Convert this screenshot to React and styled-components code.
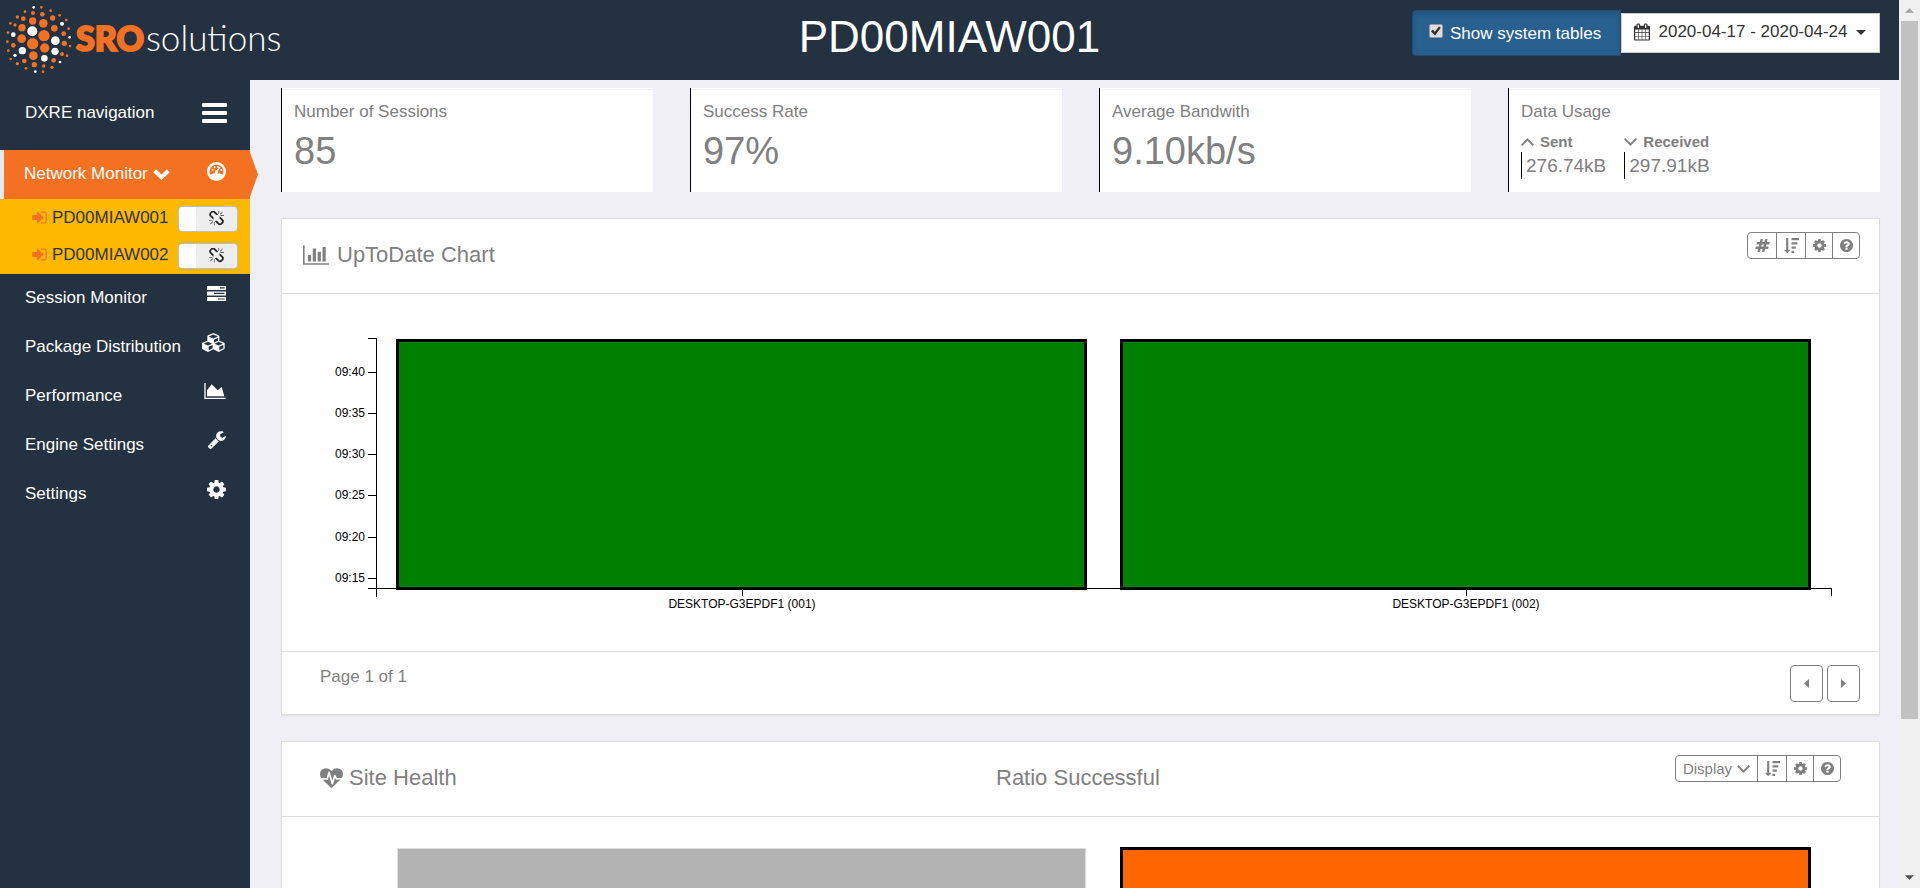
import React, { useLayoutEffect, useRef, useState } from 'react';
import styled, { createGlobalStyle } from 'styled-components';

const GlobalStyle = createGlobalStyle`
  *, *::before, *::after { box-sizing: border-box; }
  body {
    margin: 0;
    background: #f0eff5;
    color: #808080;
    font: 17px/24px "Liberation Sans", Arial, sans-serif;
  }
  button { font: inherit; color: inherit; cursor: pointer; }
  a { color: inherit; text-decoration: none; }
  h1, h2, p, ul { margin: 0; padding: 0; font-weight: normal; }
  ul { list-style: none; }
`;

/* ---------- icons ---------- */

const ICONS = {
  signIn: {
    box: '0 128 1792 1536',
    d: 'M1312 896q0 26-19 45l-544 544q-19 19-45 19t-45-19-19-45v-288h-448q-26 0-45-19t-19-45v-384q0-26 19-45t45-19h448v-288q0-26 19-45t45-19 45 19l544 544q19 19 19 45zm352-352v704q0 119-84.5 203.5t-203.5 84.5h-320q-13 0-22.5-9.5t-9.5-22.5q0-4-1-20t-.5-26.5 3-23.5 10-19.5 20.5-6.5h320q66 0 113-47t47-113v-704q0-66-47-113t-113-47h-312l-11.5-1-11.5-3-8-5.5-7-9-2-13.5q0-4-1-20t-.5-26.5 3-23.5 10-19.5 20.5-6.5h320q119 0 203.5 84.5t84.5 203.5z',
  },
  cog: {
    box: '128 128 1536 1536',
    d: 'M1152 896q0-106-75-181t-181-75-181 75-75 181 75 181 181 75 181-75 75-181zm512-109v222q0 12-8 23t-20 13l-185 28q-19 54-39 91 35 50 107 138 10 12 10 25t-9 23q-27 37-99 108t-94 71q-12 0-26-9l-138-108q-44 23-91 38-16 136-29 186-7 28-36 28h-222q-14 0-24.5-8.5t-11.5-21.5l-28-184q-49-16-90-37l-141 107q-10 9-25 9-14 0-25-11-126-114-165-168-7-10-7-23 0-12 8-23 15-21 51-66.5t54-70.5q-27-50-41-99l-183-27q-13-2-21-12.5t-8-23.5v-222q0-12 8-23t19-13l186-28q14-46 39-92-40-57-107-138-10-12-10-24 0-10 9-23 26-36 98.5-107.5t94.5-71.5q13 0 26 10l138 107q44-23 91-38 16-136 29-186 7-28 36-28h222q14 0 24.5 8.5t11.5 21.5l28 184q49 16 90 37l142-107q9-9 24-9 13 0 25 10 129 119 165 170 7 8 7 22 0 12-8 23-15 21-51 66.5t-54 70.5q26 50 41 98l183 28q13 2 21 12.5t8 23.5z',
  },
  help: {
    box: '128 128 1536 1536',
    d: 'M1024 1376v-192q0-14-9-23t-23-9h-192q-14 0-23 9t-9 23v192q0 14 9 23t23 9h192q14 0 23-9t9-23zm256-672q0-88-55.5-163t-138.5-116-170-41q-243 0-371 213-15 24 8 42l132 100q7 6 19 6 16 0 25-12 53-68 86-92 34-24 86-24 48 0 85.5 26t37.5 59q0 38-20 61t-68 45q-63 28-115.5 86.5t-52.5 125.5v36q0 14 9 23t23 9h192q14 0 23-9t9-23q0-19 21.5-49.5t54.5-49.5q32-18 49-28.5t46-35 44.5-48 28-60.5 12.5-81zm384 192q0 209-103 385.5t-279.5 279.5-385.5 103-385.5-103-279.5-279.5-103-385.5 103-385.5 279.5-279.5 385.5-103 385.5 103 279.5 279.5 103 385.5z',
  },
  areaChart: {
    box: '0 128 2048 1536',
    d: 'M2048 1536v128h-2048v-1536h128v1408h1920zm-384-1024l256 896h-1664v-576l448-576 576 576z',
  },
  barChart: {
    box: '0 128 2048 1536',
    d: 'M640 896v512h-256v-512h256zm384-512v1024h-256v-1024h256zm1024 1152v128h-2048v-1536h128v1408h1920zm-640-896v768h-256v-768h256zm384-384v1152h-256v-1152h256z',
  },
  wrench: {
    box: '84 110 1662 1662',
    d: 'M448 1472q0-26-19-45t-45-19-45 19-19 45 19 45 45 19 45-19 19-45zm644-420l-682 682q-37 37-90 37-52 0-91-37l-106-108q-38-36-38-90 0-53 38-91l681-681q39 98 114.5 173.5t173.5 114.5zm634-435q0 39-23 106-47 134-164.5 217.5t-258.5 83.5q-185 0-316.5-131.5t-131.5-316.5 131.5-316.5 316.5-131.5q58 0 121.5 16.5t107.5 46.5q16 11 16 28t-16 28l-293 169v224l193 107q5-3 79-48.5t135.5-81 70.5-35.5q15 0 23.5 10t8.5 25z',
  },
  calendar: {
    box: '64 0 1664 1792',
    d: 'M192 1664h288v-288h-288v288zm352 0h320v-288h-320v288zm-352-352h288v-320h-288v320zm352 0h320v-320h-320v320zm-352-384h288v-288h-288v288zm736 736h320v-288h-320v288zm-384-736h320v-288h-320v288zm768 736h288v-288h-288v288zm-384-352h320v-320h-320v320zm-352-864v-288q0-13-9.5-22.5t-22.5-9.5h-64q-13 0-22.5 9.5t-9.5 22.5v288q0 13 9.5 22.5t22.5 9.5h64q13 0 22.5-9.5t9.5-22.5zm736 864h288v-320h-288v320zm-384-384h320v-288h-320v288zm384 0h288v-288h-288v288zm32-480v-288q0-13-9.5-22.5t-22.5-9.5h-64q-13 0-22.5 9.5t-9.5 22.5v288q0 13 9.5 22.5t22.5 9.5h64q13 0 22.5-9.5t9.5-22.5zm384-64v1280q0 52-38 90t-90 38h-1408q-52 0-90-38t-38-90v-1280q0-52 38-90t90-38h128v-96q0-66 47-113t113-47h64q66 0 113 47t47 113v96h384v-96q0-66 47-113t113-47h64q66 0 113 47t47 113v96h128q52 0 90 38t38 90z',
  },
  hashtag: {
    box: '0 0 1792 1792',
    d: 'M991 1024l64-256h-254l-64 256h254zm768-504l-56 224q-7 24-31 24h-327l-64 256h311q15 0 25 12 10 14 6 28l-56 224q-5 24-31 24h-327l-81 328q-7 24-31 24h-224q-16 0-26-12-9-12-6-28l78-312h-254l-81 328q-7 24-31 24h-225q-15 0-25-12-9-12-6-28l78-312h-311q-15 0-25-12-9-12-6-28l56-224q7-24 31-24h327l64-256h-311q-15 0-25-12-10-14-6-28l56-224q5-24 31-24h327l81-328q7-24 32-24h224q15 0 25 12 9 12 6 28l-78 312h254l81-328q7-24 32-24h224q15 0 25 12 9 12 6 28l-78 312h311q15 0 25 12 9 12 6 28z',
  },
  sort: {
    box: '0 0 1792 1792',
    d: 'M1216 1568v192q0 14-9 23t-23 9h-256q-14 0-23-9t-9-23v-192q0-14 9-23t23-9h256q14 0 23 9t9 23zm-480-128q0 12-10 24l-319 319q-10 9-23 9-12 0-23-9l-320-320q-15-16-7-35 8-20 30-20h192v-1376q0-14 9-23t23-9h192q14 0 23 9t9 23v1376h192q14 0 23 9t9 23zm672-384v192q0 14-9 23t-23 9h-448q-14 0-23-9t-9-23v-192q0-14 9-23t23-9h448q14 0 23 9t9 23zm192-512v192q0 14-9 23t-23 9h-640q-14 0-23-9t-9-23v-192q0-14 9-23t23-9h640q14 0 23 9t9 23zm192-512v192q0 14-9 23t-23 9h-832q-14 0-23-9t-9-23v-192q0-14 9-23t23-9h832q14 0 23 9t9 23z',
  },
  unlink: {
    box: '64 64 1664 1664',
    d: 'M503 1271l-256 256q-10 9-23 9-12 0-23-9-9-10-9-23t9-23l256-256q10-9 23-9t23 9q9 10 9 23t-9 23zm169 41v320q0 14-9 23t-23 9-23-9-9-23v-320q0-14 9-23t23-9 23 9 9 23zm-224-224q0 14-9 23t-23 9h-320q-14 0-23-9t-9-23 9-23 23-9h320q14 0 23 9t9 23zm1264 128q0 120-85 203l-147 146q-83 83-203 83-121 0-204-85l-334-335q-21-21-42-56l239-18 273 274q28 28 68 28.5t68-27.5l147-146q28-28 28-67 0-40-28-68l-274-275 18-239q35 21 56 42l336 336q84 86 84 204zm-617-724l-239 18-273-274q-28-28-68-28-39 0-68 27l-147 146q-28 28-28 67 0 40 28 68l274 274-18 240q-35-21-56-42l-336-336q-84-86-84-204 0-120 85-203l147-146q83-83 203-83 121 0 204 85l334 335q21 21 42 56zm633 84q0 14-9 23t-23 9h-320q-14 0-23-9t-9-23 9-23 23-9h320q14 0 23 9t9 23zm-544-544v320q0 14-9 23t-23 9-23-9-9-23v-320q0-14 9-23t23-9 23 9 9 23zm407 151l-256 256q-11 9-23 9t-23-9q-9-10-9-23t9-23l256-256q10-9 23-9t23 9q9 10 9 23t-9 23z',
  },
  cubes: {
    box: '0 0 2304 1792',
    d: 'M640 1632l384-192v-314l-384 164v342zm-64-454l404-173-404-173-404 173zm1088 454l384-192v-314l-384 164v342zm-64-454l404-173-404-173-404 173zm-448-293l384-165v-266l-384 164v267zm-64-379l441-189-441-189-441 189zm1088 518v416q0 36-19 67t-52 47l-448 224q-25 14-57 14t-57-14l-448-224q-4-2-7-4-2 2-7 4l-448 224q-25 14-57 14t-57-14l-448-224q-33-16-52-47t-19-67v-416q0-38 21.5-70t56.5-48l434-186v-400q0-38 21.5-70t56.5-48l448-192q23-10 50-10t50 10l448 192q35 16 56.5 48t21.5 70v400l434 186q36 16 57 48t21 70z',
  },
  heartbeat: {
    box: '0 128 1792 1536',
    d: 'M1280 1024h305q-5 6-10 10.5t-9 7.5l-3 4-623 600q-18 18-44 18t-44-18l-624-602q-5-2-21-20h369q22 0 39.5-13.5t22.5-34.5l70-281 190 667q6 20 23 33t39 13q21 0 38-13t23-33l146-485 56 112q18 35 57 35zm512-428q0 145-103 300h-369l-111-221q-8-17-25.5-27t-36.5-8q-45 5-56 46l-129 430-196-686q-6-20-23.5-33t-39.5-13-39 13.5-22 34.5l-116 464h-423q-103-155-103-300 0-220 127-344t351-124q62 0 126.5 21.5t120 58 95.5 68.5 76 68q36-36 76-68t95.5-68.5 120-58 126.5-21.5q224 0 351 124t127 344z',
  },
  tasks: {
    box: '0 0 19 15',
    d: 'M0 0H19V4H0ZM0 5.5H19V9.5H0ZM0 11H19V15H0ZM13 1.2V2.4H17.5V1.2ZM7 6.8V8H17.5V6.8ZM11 12.4V13.6H17.5V12.4Z',
    evenOdd: true,
  },
  dashboard: {
    box: '0 0 19 19',
    d: 'M9.5 0A9.5 9.5 0 1 1 9.5 19A9.5 9.5 0 1 1 9.5 0ZM9.5 2.6A6.9 6.9 0 0 0 3.4 12.7C5.2 11.7 7.3 11.3 9.5 11.3S13.8 11.7 15.6 12.7A6.9 6.9 0 0 0 9.5 2.6ZM4.6 7.8a1 1 0 1 0 2 0a1 1 0 1 0-2 0ZM6.6 5.2a1 1 0 1 0 2 0a1 1 0 1 0-2 0ZM10 5a1 1 0 1 0 2 0a1 1 0 1 0-2 0ZM13.3 8a1 1 0 1 0 2 0a1 1 0 1 0-2 0ZM12.6 4.8L13.4 5.4L10.9 9.1A1.5 1.5 0 1 1 9.7 8.3Z',
    evenOdd: true,
  },
  chevronBold: { box: '0 0 18 12', d: 'M0 3.6L3.2 .4L9 6L14.8 .4L18 3.6L9 12Z' },
  chevronDown: { box: '0 0 13 8', d: 'M0 1.2L1.3 0L6.5 5.2L11.7 0L13 1.2L6.5 8Z' },
  chevronUp: { box: '0 0 13 8', d: 'M0 6.8L6.5 0L13 6.8L11.7 8L6.5 2.8L1.3 8Z' },
  caretDown: { box: '0 0 10 5', d: 'M0 0H10L5 5Z' },
  caretUp: { box: '0 0 10 5', d: 'M0 5H10L5 0Z' },
  caretLeft: { box: '0 0 5 9', d: 'M5 0V9L0 4.5Z' },
  caretRight: { box: '0 0 5 9', d: 'M0 0V9L5 4.5Z' },
  check: { box: '0 0 10 10', d: 'M0 5.4L1.8 3.6L3.8 5.8L8 .4L9.8 1.8L4 9.4Z' },
};

const Glyph = styled.svg`
  display: block;
  flex: none;
  fill: currentColor;
`;

function Icon({ name, width, height, className }) {
  const icon = ICONS[name];
  return (
    <Glyph className={className} width={width} height={height} viewBox={icon.box} aria-hidden="true">
      <path d={icon.d} fillRule={icon.evenOdd ? 'evenodd' : 'nonzero'} />
    </Glyph>
  );
}

/* ---------- page frame ---------- */

const Shell = styled.div`
  display: flex;
  height: 100vh;
  overflow: hidden;
`;

const Page = styled.div`
  flex: 1;
  min-width: 0;
  display: flex;
  flex-direction: column;
`;

const Body = styled.div`
  flex: 1;
  min-height: 0;
  display: flex;
`;

const ScrollTrack = styled.div`
  flex: none;
  width: 21px;
  padding: 0 2px;
  display: flex;
  flex-direction: column;
  background: #f0f0f0;
`;

const ScrollArrow = styled.div`
  flex: none;
  height: 21px;
  display: grid;
  place-items: center;
  color: ${(p) => (p.$dim ? '#a3a3a3' : '#505050')};
`;

const ScrollLane = styled.div`
  flex: 1;
`;

const ScrollThumb = styled.div`
  height: 82.5%;
  background: #c1c1c1;
`;

/* ---------- header ---------- */

const TopBar = styled.header`
  flex: none;
  height: 80px;
  display: grid;
  grid-template-columns: 1fr auto 1fr;
  align-items: start;
  background: #233140;
  color: #fff;
`;

const Brand = styled.a`
  display: flex;
  align-items: flex-start;
  gap: 4px;
  padding: 5px 0 0 5px;
`;

const BrandWords = styled.span`
  display: flex;
  align-items: baseline;
  gap: 2px;
  padding-top: 12px;
  font-family: Lato, sans-serif;
  line-height: 40px;
`;

const BrandStrong = styled.strong`
  font-size: 34px;
  font-weight: 900;
  color: #f37121;
  -webkit-text-stroke: 2px #f37121;
`;

const BrandLight = styled.span`
  font-size: 35px;
  font-weight: 300;
`;

const PageTitle = styled.h1`
  font-size: 44px;
  line-height: 74px;
`;

const Controls = styled.div`
  justify-self: end;
  display: flex;
  align-items: center;
  height: 66px;
  margin-right: 19px;
`;

const SystemToggle = styled.label`
  display: flex;
  align-items: center;
  gap: 7px;
  min-width: 209px;
  height: 46px;
  padding: 2px 16px 0;
  border: 1px solid #204d74;
  border-radius: 4px 0 0 4px;
  background: #286090;
  box-shadow: inset 0 3px 5px rgba(0, 0, 0, 0.13);
  cursor: pointer;
`;

const CheckFrame = styled.span`
  display: grid;
  place-items: center;
  color: #333;
  margin-bottom: 6px;
  > * { grid-area: 1 / 1; }
  > svg { pointer-events: none; visibility: hidden; }
  > input:checked + svg { visibility: visible; }
`;

const CheckInput = styled.input`
  appearance: none;
  width: 14px;
  height: 14px;
  margin: 0;
  border: 1px solid #999;
  border-radius: 2px;
  background: #dedede;
`;

const RangeButton = styled.button`
  display: flex;
  align-items: center;
  justify-content: space-between;
  min-width: 259px;
  height: 40px;
  padding: 0 13px 2px 12px;
  border: 1px solid #ccc;
  background: #fff;
  color: #333;
`;

/* ---------- sidebar ---------- */

const Sidebar = styled.nav`
  flex: none;
  width: 250px;
  background: #233140;
  color: #fff;
`;

const SidebarHead = styled.div`
  display: flex;
  justify-content: space-between;
  align-items: center;
  height: 70px;
  padding: 0 23px 5px 25px;
`;

const MenuButton = styled.button`
  display: flex;
  flex-direction: column;
  gap: 4px;
  padding: 0;
  border: 0;
  background: none;
`;

const MenuBar = styled.span`
  width: 25px;
  height: 4px;
  border-radius: 1px;
  background: #fff;
`;

const NavIcon = styled.span`
  margin: 0 0 10px auto;
`;

const NavLink = styled.a`
  position: relative;
  display: flex;
  align-items: center;
  gap: 5px;
  height: 49px;
  padding: 0 24px 1px 25px;
  ${(p) =>
    p.$active &&
    `
    padding-left: 20px;
    border-left: 4px solid #e9e9ee;
    background: #f37121;
    ${NavIcon} { margin-bottom: 5px; }
    &::after {
      content: '';
      position: absolute;
      top: 0;
      bottom: 0;
      left: 100%;
      width: 8px;
      background: #f37121;
      clip-path: polygon(0 5%, 100% 50%, 0 95%);
    }
  `}
`;

const SubMenu = styled.ul`
  padding-bottom: 1px;
  background: #fcb900;
  color: #333;
`;

const SubItem = styled.li`
  display: flex;
  align-items: center;
  justify-content: space-between;
  height: 37px;
  padding: 0 12px 0 31px;
`;

const SubLink = styled.a`
  display: flex;
  align-items: center;
  gap: 4px;
`;

const SignInIcon = styled(Icon)`
  color: #f37121;
`;

const LinkSwitch = styled.button`
  display: flex;
  width: 60px;
  height: 26px;
  margin-top: 2px;
  padding: 0 0 0 17px;
  border: 1px solid #c0c0c0;
  border-radius: 4px;
  background: linear-gradient(90deg, #fff 17px, #eee 17px);
  color: #222;
  justify-content: center;
  align-items: center;
`;

/* ---------- content ---------- */

const Main = styled.main`
  flex: 1;
  min-width: 0;
  overflow: hidden;
  padding: 8px 19px 0 31px;
`;

const Stack = styled.div`
  display: flex;
  flex-direction: column;
  gap: 26px;
`;

const StatGrid = styled.section`
  display: grid;
  grid-template-columns: repeat(4, 1fr);
  gap: 37px;
`;

const StatCard = styled.article`
  min-height: 104px;
  padding: 12px 12px 0;
  border-left: 1px solid #000;
  background: #fff;
  box-shadow: inset 0 2px 0 -1px #fff, inset 0 2px 1px rgba(0, 0, 0, 0.06);
`;

const StatValue = styled.p`
  font-size: 38px;
  line-height: 54px;
`;

const Transfers = styled.div`
  display: flex;
  gap: 18px;
  padding-top: 8px;
`;

const TransferLabel = styled.p`
  display: flex;
  align-items: center;
  gap: 6px;
  font-size: 15px;
  font-weight: bold;
  line-height: 20px;
`;

const TransferValue = styled.p`
  padding-left: 4px;
  border-left: 1px solid #000;
  font-size: 19px;
  line-height: 27px;
`;

const Panel = styled.section`
  border: 1px solid #ddd;
  background: #fff;
  box-shadow: 0 1px 1px rgba(0, 0, 0, 0.05);
`;

const PanelHead = styled.header`
  display: grid;
  grid-template-columns: ${(p) => p.$columns};
  align-items: center;
  height: 75px;
  padding: ${(p) => p.$padding};
  border-bottom: 1px solid #ddd;
`;

const PanelTitle = styled.h2`
  display: flex;
  align-items: center;
  gap: ${(p) => p.$gap || '8px'};
  padding-bottom: 2px;
  font-size: 22px;
  line-height: 32px;
`;

const Tools = styled.div`
  display: flex;
  align-self: start;
  justify-self: end;
  height: 27px;
  margin-top: 13px;
  border: 1px solid #808080;
  border-radius: 4px;
`;

const ToolButton = styled.button`
  display: flex;
  align-items: center;
  justify-content: center;
  gap: 5px;
  min-width: ${(p) => p.$width};
  padding: 0;
  border: 0;
  background: none;
  font-size: 15px;
  line-height: 20px;
  & + & {
    box-sizing: content-box;
    border-left: 1px solid #808080;
  }
`;

const ChartArea = styled.div`
  height: 357px;
`;

const ChartSvg = styled.svg`
  display: block;
  width: 100%;
  height: 100%;
  text { font-size: 12px; fill: #000; }
`;

const PanelFoot = styled.footer`
  display: flex;
  justify-content: space-between;
  align-items: center;
  height: 63px;
  padding: 0 19px 0 38px;
  border-top: 1px solid #ddd;
`;

const PageCount = styled.p`
  align-self: start;
  padding-top: 13px;
`;

const Pager = styled.div`
  display: flex;
  gap: 4px;
`;

const PagerButton = styled.button`
  display: grid;
  place-items: center;
  width: 33px;
  height: 37px;
  padding: 0;
  border: 1px solid #808080;
  border-radius: 4px;
  background: #fff;
`;

/* ---------- charts ---------- */

function useWidth() {
  const ref = useRef(null);
  const [width, setWidth] = useState(1200);
  useLayoutEffect(() => {
    const measure = () => setWidth(ref.current.clientWidth);
    measure();
    const observer = new ResizeObserver(measure);
    observer.observe(ref.current);
    return () => observer.disconnect();
  }, []);
  return [ref, width];
}

const AXIS_LEFT = 95;
const AXIS_RIGHT = 48;

function bands(width) {
  const start = AXIS_LEFT + 19;
  const band = Math.round((width - AXIS_RIGHT - 21 - start - 33) / 2);
  return [start, start + band + 33].map((x) => ({ x, band, mid: x + Math.round(band / 2) }));
}

function Bar({ x, y, width, height, fill, outline = '#000', edge = 3 }) {
  return (
    <g>
      <rect x={x} y={y} width={width} height={height} fill={outline} />
      <rect x={x + edge} y={y + edge} width={width - 2 * edge} height={height - 2 * edge} fill={fill} />
    </g>
  );
}

const TICKS = [
  ['09:40', 79],
  ['09:35', 120],
  ['09:30', 161],
  ['09:25', 202],
  ['09:20', 244],
  ['09:15', 285],
];

function UpToDateChart() {
  const [ref, width] = useWidth();
  const names = ['DESKTOP-G3EPDF1 (001)', 'DESKTOP-G3EPDF1 (002)'];
  const right = width - AXIS_RIGHT;
  return (
    <ChartArea ref={ref}>
      <ChartSvg role="img" aria-label="UpToDate Chart">
        <rect x={AXIS_LEFT - 1} y="44" width="1" height="259" />
        <rect x={AXIS_LEFT - 9} y="44" width="9" height="1" />
        <rect x={AXIS_LEFT - 9} y="294" width={right - AXIS_LEFT + 10} height="1" />
        <rect x={right} y="294" width="1" height="8" />
        {TICKS.map(([label, y]) => (
          <g key={label}>
            <rect x={AXIS_LEFT - 9} y={y - 1} width="9" height="1" />
            <text x={AXIS_LEFT - 12} y={y + 3} textAnchor="end">{label}</text>
          </g>
        ))}
        {bands(width).map(({ x, band, mid }, i) => (
          <g key={names[i]}>
            <rect x={mid} y="294" width="1" height="8" />
            <Bar x={x} y={45} width={band} height={251} fill="#008000" />
            <text x={mid} y="314" textAnchor="middle">{names[i]}</text>
          </g>
        ))}
      </ChartSvg>
    </ChartArea>
  );
}

function HealthChart() {
  const [ref, width] = useWidth();
  const [left, right] = bands(width);
  return (
    <ChartArea ref={ref}>
      <ChartSvg role="img" aria-label="Site Health and Ratio Successful">
        <Bar x={left.x + 1} y={31} width={left.band - 2} height={249} fill="#b3b3b3" outline="#ddd" edge={1} />
        <Bar x={right.x} y={30} width={right.band} height={251} fill="#ff6600" />
      </ChartSvg>
    </ChartArea>
  );
}

/* ---------- logo ---------- */

const ORANGE_DOTS = [
  [124, 22, 4], [75, 35, 4], [99, 39, 6], [152, 32, 4], [127, 43, 7], [179, 46, 4], [52, 51, 5],
  [70, 56, 7], [158, 54, 8], [98, 63, 11], [130, 70, 13], [199, 60, 4], [31, 70, 4], [45, 75, 5],
  [66, 83, 11], [163, 85, 10], [206, 86, 4], [191, 101, 7], [24, 98, 4], [132, 107, 17],
  [65, 116, 13], [22, 125, 4], [98, 131, 17], [193, 130, 8], [210, 138, 4], [40, 136, 7],
  [134, 144, 14], [25, 152, 4], [100, 167, 13], [186, 162, 6], [201, 167, 4], [32, 177, 4],
  [73, 183, 7], [161, 181, 7], [52, 191, 5], [103, 194, 8], [131, 198, 5], [156, 202, 5],
  [78, 205, 4], [129, 215, 4],
];

const WHITE_DOTS = [
  [101, 22, 4], [97, 94, 15], [40, 104, 7], [186, 71, 6], [209, 112, 4], [166, 122, 13],
  [165, 154, 11], [67, 152, 11], [133, 175, 10], [45, 166, 5], [180, 186, 4], [106, 215, 4],
];

function LogoMark() {
  return (
    <svg width="67" height="70" viewBox="15 15 201 210" aria-hidden="true">
      <g fill="#f37121">
        {ORANGE_DOTS.map(([x, y, r]) => <circle key={`${x}-${y}`} cx={x} cy={y} r={r} />)}
      </g>
      <g fill="#fff">
        {WHITE_DOTS.map(([x, y, r]) => <circle key={`${x}-${y}`} cx={x} cy={y} r={r} />)}
      </g>
    </svg>
  );
}

/* ---------- app ---------- */

const NAV = [
  { label: 'Session Monitor', icon: 'tasks', width: 19, height: 15 },
  { label: 'Package Distribution', icon: 'cubes', width: 24, height: 19 },
  { label: 'Performance', icon: 'areaChart', width: 22, height: 16 },
  { label: 'Engine Settings', icon: 'wrench', width: 18, height: 18 },
  { label: 'Settings', icon: 'cog', width: 19, height: 19 },
];

const STATS = [
  ['Number of Sessions', '85'],
  ['Success Rate', '97%'],
  ['Average Bandwith', '9.10kb/s'],
];

function CommonTools() {
  return (
    <>
      <ToolButton $width="28px" aria-label="Sort"><Icon name="sort" width={15} height={15} /></ToolButton>
      <ToolButton $width="26px" aria-label="Options"><Icon name="cog" width={13} height={13} /></ToolButton>
      <ToolButton $width="26px" aria-label="Help"><Icon name="help" width={13} height={13} /></ToolButton>
    </>
  );
}

export default function App() {
  return (
    <Shell>
      <GlobalStyle />
      <Page>
        <TopBar>
          <Brand href="#" aria-label="SRO solutions">
            <LogoMark />
            <BrandWords>
              <BrandStrong>SRO</BrandStrong>
              <BrandLight>solutions</BrandLight>
            </BrandWords>
          </Brand>
          <PageTitle>PD00MIAW001</PageTitle>
          <Controls>
            <SystemToggle>
              <CheckFrame>
                <CheckInput type="checkbox" defaultChecked />
                <Icon name="check" width={10} height={10} />
              </CheckFrame>
              Show system tables
            </SystemToggle>
            <RangeButton>
              <Icon name="calendar" width={16} height={18} />
              <span>2020-04-17 - 2020-04-24</span>
              <Icon name="caretDown" width={10} height={5} />
            </RangeButton>
          </Controls>
        </TopBar>
        <Body>
          <Sidebar>
            <SidebarHead>
              DXRE navigation
              <MenuButton aria-label="Toggle navigation">
                <MenuBar />
                <MenuBar />
                <MenuBar />
              </MenuButton>
            </SidebarHead>
            <NavLink href="#" $active>
              Network Monitor
              <Icon name="chevronBold" width={17} height={11} />
              <NavIcon><Icon name="dashboard" width={19} height={19} /></NavIcon>
            </NavLink>
            <SubMenu>
              {['PD00MIAW001', 'PD00MIAW002'].map((name) => (
                <SubItem key={name}>
                  <SubLink href="#">
                    <SignInIcon name="signIn" width={17} height={15} />
                    {name}
                  </SubLink>
                  <LinkSwitch aria-label={`Toggle ${name}`}>
                    <Icon name="unlink" width={15} height={15} />
                  </LinkSwitch>
                </SubItem>
              ))}
            </SubMenu>
            {NAV.map((item) => (
              <NavLink href="#" key={item.label}>
                {item.label}
                <NavIcon><Icon name={item.icon} width={item.width} height={item.height} /></NavIcon>
              </NavLink>
            ))}
          </Sidebar>
          <Main>
            <Stack>
              <StatGrid>
                {STATS.map(([label, value]) => (
                  <StatCard key={label}>
                    <p>{label}</p>
                    <StatValue>{value}</StatValue>
                  </StatCard>
                ))}
                <StatCard>
                  <p>Data Usage</p>
                  <Transfers>
                    <div>
                      <TransferLabel><Icon name="chevronUp" width={13} height={8} />Sent</TransferLabel>
                      <TransferValue>276.74kB</TransferValue>
                    </div>
                    <div>
                      <TransferLabel><Icon name="chevronDown" width={13} height={8} />Received</TransferLabel>
                      <TransferValue>297.91kB</TransferValue>
                    </div>
                  </Transfers>
                </StatCard>
              </StatGrid>

              <Panel>
                <PanelHead $columns="1fr auto" $padding="0 19px 0 21px">
                  <PanelTitle><Icon name="barChart" width={26} height={20} />UpToDate Chart</PanelTitle>
                  <Tools>
                    <ToolButton $width="28px" aria-label="Count"><Icon name="hashtag" width={15} height={15} /></ToolButton>
                    <CommonTools />
                  </Tools>
                </PanelHead>
                <UpToDateChart />
                <PanelFoot>
                  <PageCount>Page 1 of 1</PageCount>
                  <Pager>
                    <PagerButton aria-label="Previous page"><Icon name="caretLeft" width={5} height={9} /></PagerButton>
                    <PagerButton aria-label="Next page"><Icon name="caretRight" width={5} height={9} /></PagerButton>
                  </Pager>
                </PanelFoot>
              </Panel>

              <Panel>
                <PanelHead $columns="4fr 3fr 2fr" $padding="0 38px">
                  <PanelTitle $gap="6px"><Icon name="heartbeat" width={23} height={20} />Site Health</PanelTitle>
                  <PanelTitle>Ratio Successful</PanelTitle>
                  <Tools>
                    <ToolButton $width="81px">Display<Icon name="chevronDown" width={13} height={8} /></ToolButton>
                    <CommonTools />
                  </Tools>
                </PanelHead>
                <HealthChart />
              </Panel>
            </Stack>
          </Main>
        </Body>
      </Page>
      <ScrollTrack aria-hidden="true">
        <ScrollArrow $dim><Icon name="caretUp" width={9} height={5} /></ScrollArrow>
        <ScrollLane><ScrollThumb /></ScrollLane>
        <ScrollArrow><Icon name="caretDown" width={9} height={5} /></ScrollArrow>
      </ScrollTrack>
    </Shell>
  );
}
